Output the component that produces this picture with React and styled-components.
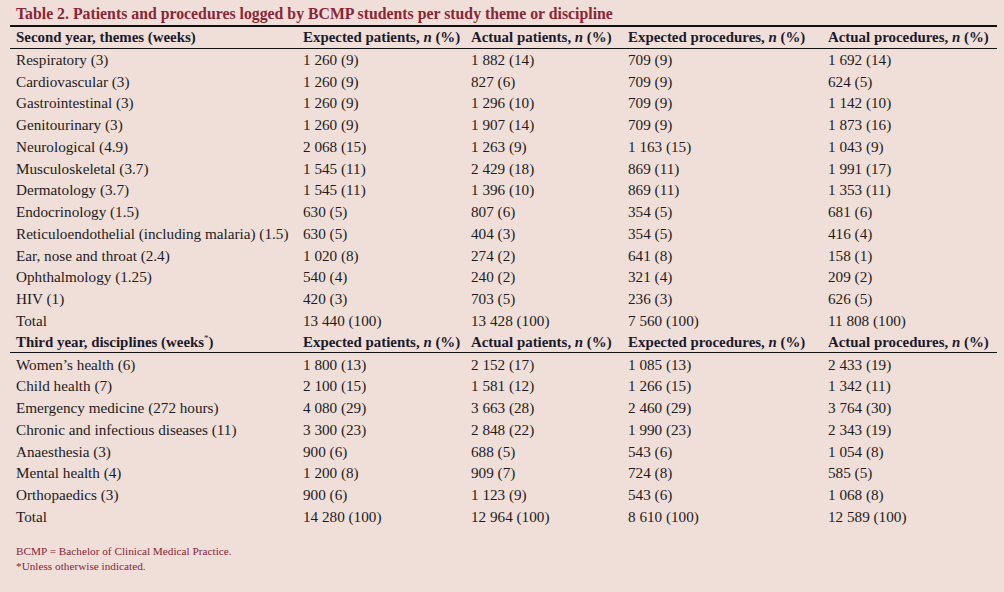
import React from 'react';
import styled, { createGlobalStyle } from 'styled-components';

const GlobalStyle = createGlobalStyle`
  html, body {
    margin: 0;
    padding: 0;
    background: #efdfd8;
  }
  body {
    min-height: 592px;
    font-family: "Liberation Serif", "DejaVu Serif", serif;
  }
`;

const second = [
  ['Respiratory (3)', '1 260 (9)', '1 882 (14)', '709 (9)', '1 692 (14)'],
  ['Cardiovascular (3)', '1 260 (9)', '827 (6)', '709 (9)', '624 (5)'],
  ['Gastrointestinal (3)', '1 260 (9)', '1 296 (10)', '709 (9)', '1 142 (10)'],
  ['Genitourinary (3)', '1 260 (9)', '1 907 (14)', '709 (9)', '1 873 (16)'],
  ['Neurological (4.9)', '2 068 (15)', '1 263 (9)', '1 163 (15)', '1 043 (9)'],
  ['Musculoskeletal (3.7)', '1 545 (11)', '2 429 (18)', '869 (11)', '1 991 (17)'],
  ['Dermatology (3.7)', '1 545 (11)', '1 396 (10)', '869 (11)', '1 353 (11)'],
  ['Endocrinology (1.5)', '630 (5)', '807 (6)', '354 (5)', '681 (6)'],
  ['Reticuloendothelial (including malaria) (1.5)', '630 (5)', '404 (3)', '354 (5)', '416 (4)'],
  ['Ear, nose and throat (2.4)', '1 020 (8)', '274 (2)', '641 (8)', '158 (1)'],
  ['Ophthalmology (1.25)', '540 (4)', '240 (2)', '321 (4)', '209 (2)'],
  ['HIV (1)', '420 (3)', '703 (5)', '236 (3)', '626 (5)'],
  ['Total', '13 440 (100)', '13 428 (100)', '7 560 (100)', '11 808 (100)'],
];

const third = [
  ['Women\u2019s health (6)', '1 800 (13)', '2 152 (17)', '1 085 (13)', '2 433 (19)'],
  ['Child health (7)', '2 100 (15)', '1 581 (12)', '1 266 (15)', '1 342 (11)'],
  ['Emergency medicine (272 hours)', '4 080 (29)', '3 663 (28)', '2 460 (29)', '3 764 (30)'],
  ['Chronic and infectious diseases (11)', '3 300 (23)', '2 848 (22)', '1 990 (23)', '2 343 (19)'],
  ['Anaesthesia (3)', '900 (6)', '688 (5)', '543 (6)', '1 054 (8)'],
  ['Mental health (4)', '1 200 (8)', '909 (7)', '724 (8)', '585 (5)'],
  ['Orthopaedics (3)', '900 (6)', '1 123 (9)', '543 (6)', '1 068 (8)'],
  ['Total', '14 280 (100)', '12 964 (100)', '8 610 (100)', '12 589 (100)'],
];

const measures = ['Expected patients', 'Actual patients', 'Expected procedures', 'Actual procedures'];

const Page = styled.div`
  padding: 0 7px 0 10px;
  color: #1e1a1d;
`;

const Title = styled.div`
  height: 22px;
  padding: 3px 0 0 6px;
  font-size: 15.8px;
  font-weight: bold;
  line-height: 22px;
  color: #8c2535;
  white-space: nowrap;
`;

const Table = styled.table`
  width: 987px;
  border-collapse: collapse;
  table-layout: fixed;
  border-top: 2px solid #111;
`;

const Col = styled.col`
  width: ${(p) => p.$w}px;
`;

const HeadRow = styled.tr`
  height: 22px;
  border-bottom: 1px solid #111;
`;

const HeadCell = styled.th`
  padding: 1px 0 0 6px;
  text-align: left;
  font-size: 14.9px;
  font-weight: bold;
  color: #1b1a2c;
  white-space: nowrap;
`;

const Star = styled.sup`
  font-size: 9px;
  font-weight: normal;
`;

const Row = styled.tr`
  height: 21.75px;
`;

const Cell = styled.td`
  padding: 2px 0 0 6px;
  font-size: 15.2px;
  white-space: nowrap;
`;

const Notes = styled.div`
  padding: 17px 0 0 6px;
  font-size: 11.25px;
  line-height: 15px;
  color: #8c2535;
`;

const Section = ({ label, rows }) => (
  <tbody>
    <HeadRow>
      <HeadCell>{label}</HeadCell>
      {measures.map((m) => (
        <HeadCell key={m}>
          {m}, <i>n</i> (%)
        </HeadCell>
      ))}
    </HeadRow>
    {rows.map((r, i) => (
      <Row key={i}>
        {r.map((v, j) => (
          <Cell key={j}>{v}</Cell>
        ))}
      </Row>
    ))}
  </tbody>
);

const App = () => (
  <Page>
    <GlobalStyle />
    <Title>Table 2. Patients and procedures logged by BCMP students per study theme or discipline</Title>
    <Table>
      <colgroup>
        <Col $w={287} />
        <Col $w={168} />
        <Col $w={157} />
        <Col $w={200} />
        <Col $w={175} />
      </colgroup>
      <Section label="Second year, themes (weeks)" rows={second} />
      <Section label={<>Third year, disciplines (weeks<Star>*</Star>)</>} rows={third} />
    </Table>
    <Notes>
      BCMP = Bachelor of Clinical Medical Practice.
      <br />
      *Unless otherwise indicated.
    </Notes>
  </Page>
);

export default App;
